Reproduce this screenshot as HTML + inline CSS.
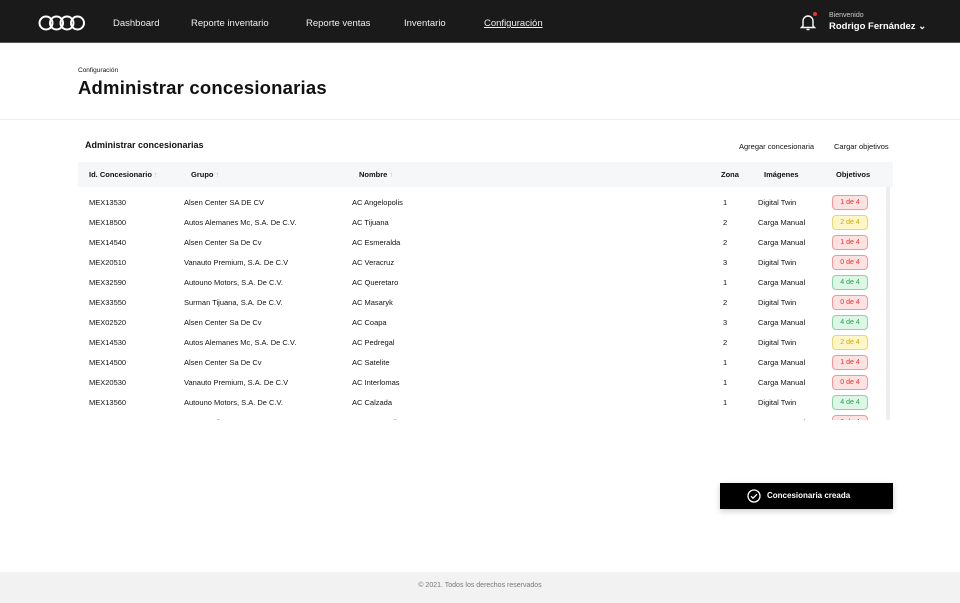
<!DOCTYPE html><html><head><meta charset="utf-8"><style>
*{margin:0;padding:0;box-sizing:border-box}
body{width:960px;height:603px;background:#fff;font-family:"Liberation Sans",sans-serif;color:#111;position:relative;overflow:hidden}
.nav{position:absolute;left:0;top:0;width:960px;height:43px;background:#1a1a1a;border-bottom:1px solid #555}
.nav a{position:absolute;top:18px;color:#eee;font-size:9.5px;text-decoration:none}
.hdr{position:absolute;top:44px;left:0;width:960px;height:76px;border-bottom:1px solid #eee}
.t{position:absolute;white-space:nowrap}
.th{position:absolute;left:78px;top:162px;width:815px;height:25px;background:#f6f7f8}
.th span{position:absolute;top:8px;font-size:7.5px;font-weight:bold}
.body{position:absolute;left:78px;top:187px;width:815px;height:233px;overflow:hidden}
.r{position:absolute;left:0;width:815px;height:20px;font-size:7.5px}
.r span{position:absolute;top:0}
.b{position:absolute;left:754px;top:-3px;width:36px;height:15px;border-radius:4px;border:1px solid;text-align:center;line-height:13px;font-size:7px}
.red{background:#fde2e2;border-color:#f19999;color:#e53030}
.yel{background:#fdf6c8;border-color:#eed66a;color:#d4a800}
.grn{background:#ddf6e6;border-color:#86d6a2;color:#27a04e}
</style></head><body>
<div class="nav">
<svg style="position:absolute;left:38px;top:15px" width="48" height="16" viewBox="0 0 48 16" fill="none" stroke="#fff" stroke-width="2"><circle cx="8" cy="8" r="6.5"/><circle cx="18.5" cy="8" r="6.5"/><circle cx="29" cy="8" r="6.5"/><circle cx="39.5" cy="8" r="6.5"/></svg>
<a style="left:113px">Dashboard</a><a style="left:191px">Reporte inventario</a><a style="left:306px">Reporte ventas</a><a style="left:404px">Inventario</a><a style="left:484px;text-decoration:underline">Configuración</a>
<svg style="position:absolute;left:800px;top:13px" width="16" height="18" viewBox="0 0 16 18" fill="none" stroke="#fff" stroke-width="1.4"><path d="M3 13V8a5 5 0 0 1 10 0v5l1.5 1.5h-13z"/><path d="M6.5 16.5h3"/></svg>
<div style="position:absolute;left:813px;top:12px;width:4px;height:4px;border-radius:50%;background:#e33"></div>
<div class="t" style="left:829px;top:12px;font-size:7px;color:#ccc">Bienvenido</div>
<div class="t" style="left:829px;top:21px;font-size:9.5px;color:#fff;font-weight:bold">Rodrigo Fernández ⌄</div>
</div>
<div class="hdr">
<div class="t" style="left:78px;top:23px;font-size:6.5px">Configuración</div>
<div class="t" style="left:78px;top:33px;font-size:18.5px;font-weight:bold;letter-spacing:0.2px">Administrar concesionarias</div>
</div>
<div class="t" style="left:85px;top:140px;font-size:9px;font-weight:bold">Administrar concesionarias</div>
<div class="t" style="left:739px;top:142px;font-size:7.5px">Agregar concesionaria</div>
<div class="t" style="left:834px;top:142px;font-size:7.5px">Cargar objetivos</div>
<div class="th"><span style="left:11px">Id. Concesionario <b style="color:#bbb">↑</b></span><span style="left:113px">Grupo <b style="color:#bbb">↑</b></span><span style="left:281px">Nombre <b style="color:#bbb">↑</b></span><span style="left:643px">Zona</span><span style="left:686px">Imágenes</span><span style="left:758px">Objetivos</span></div>
<div class="body">
<div style="position:absolute;left:808px;top:0;width:4px;height:233px;background:#eee"></div>
<div class="r" style="top:11px"><span style="left:11px">MEX13530</span><span style="left:106px">Alsen Center SA DE CV</span><span style="left:274px">AC Angelopolis</span><span style="left:645px">1</span><span style="left:680px">Digital Twin</span><div class="b red">1 de 4</div></div>
<div class="r" style="top:31px"><span style="left:11px">MEX18500</span><span style="left:106px">Autos Alemanes Mc, S.A. De C.V.</span><span style="left:274px">AC Tijuana</span><span style="left:645px">2</span><span style="left:680px">Carga Manual</span><div class="b yel">2 de 4</div></div>
<div class="r" style="top:51px"><span style="left:11px">MEX14540</span><span style="left:106px">Alsen Center Sa De Cv</span><span style="left:274px">AC Esmeralda</span><span style="left:645px">2</span><span style="left:680px">Carga Manual</span><div class="b red">1 de 4</div></div>
<div class="r" style="top:71px"><span style="left:11px">MEX20510</span><span style="left:106px">Vanauto Premium, S.A. De C.V</span><span style="left:274px">AC Veracruz</span><span style="left:645px">3</span><span style="left:680px">Digital Twin</span><div class="b red">0 de 4</div></div>
<div class="r" style="top:91px"><span style="left:11px">MEX32590</span><span style="left:106px">Autouno Motors, S.A. De C.V.</span><span style="left:274px">AC Queretaro</span><span style="left:645px">1</span><span style="left:680px">Carga Manual</span><div class="b grn">4 de 4</div></div>
<div class="r" style="top:111px"><span style="left:11px">MEX33550</span><span style="left:106px">Surman Tijuana, S.A. De C.V.</span><span style="left:274px">AC Masaryk</span><span style="left:645px">2</span><span style="left:680px">Digital Twin</span><div class="b red">0 de 4</div></div>
<div class="r" style="top:131px"><span style="left:11px">MEX02520</span><span style="left:106px">Alsen Center Sa De Cv</span><span style="left:274px">AC Coapa</span><span style="left:645px">3</span><span style="left:680px">Carga Manual</span><div class="b grn">4 de 4</div></div>
<div class="r" style="top:151px"><span style="left:11px">MEX14530</span><span style="left:106px">Autos Alemanes Mc, S.A. De C.V.</span><span style="left:274px">AC Pedregal</span><span style="left:645px">2</span><span style="left:680px">Digital Twin</span><div class="b yel">2 de 4</div></div>
<div class="r" style="top:171px"><span style="left:11px">MEX14500</span><span style="left:106px">Alsen Center Sa De Cv</span><span style="left:274px">AC Satelite</span><span style="left:645px">1</span><span style="left:680px">Carga Manual</span><div class="b red">1 de 4</div></div>
<div class="r" style="top:191px"><span style="left:11px">MEX20530</span><span style="left:106px">Vanauto Premium, S.A. De C.V</span><span style="left:274px">AC Interlomas</span><span style="left:645px">1</span><span style="left:680px">Carga Manual</span><div class="b red">0 de 4</div></div>
<div class="r" style="top:211px"><span style="left:11px">MEX13560</span><span style="left:106px">Autouno Motors, S.A. De C.V.</span><span style="left:274px">AC Calzada</span><span style="left:645px">1</span><span style="left:680px">Digital Twin</span><div class="b grn">4 de 4</div></div>
<div class="r" style="top:231px"><span style="left:11px">MEX18510</span><span style="left:106px">Surman Tijuana, S.A. De C.V.</span><span style="left:274px">AC Aguascalientes</span><span style="left:645px">1</span><span style="left:680px">Carga Manual</span><div class="b red">0 de 4</div></div>
</div>
<div style="position:absolute;left:720px;top:483px;width:173px;height:26px;background:#000;box-shadow:0 2px 6px rgba(0,0,0,.2)">
<svg style="position:absolute;left:27px;top:6px" width="14" height="14" viewBox="0 0 14 14" fill="none" stroke="#fff" stroke-width="1.3"><circle cx="7" cy="7" r="6"/><path d="M4 7.2l2 2 4-4"/></svg>
<div class="t" style="left:47px;top:8px;color:#fff;font-size:8px;font-weight:bold">Concesionaria creada</div></div>
<div style="position:absolute;left:0;top:572px;width:960px;height:31px;background:#f2f2f2"></div>
<div class="t" style="left:0;width:960px;text-align:center;top:582px;font-size:7px;color:#777">© 2021. Todos los derechos reservados</div>
</body></html>
